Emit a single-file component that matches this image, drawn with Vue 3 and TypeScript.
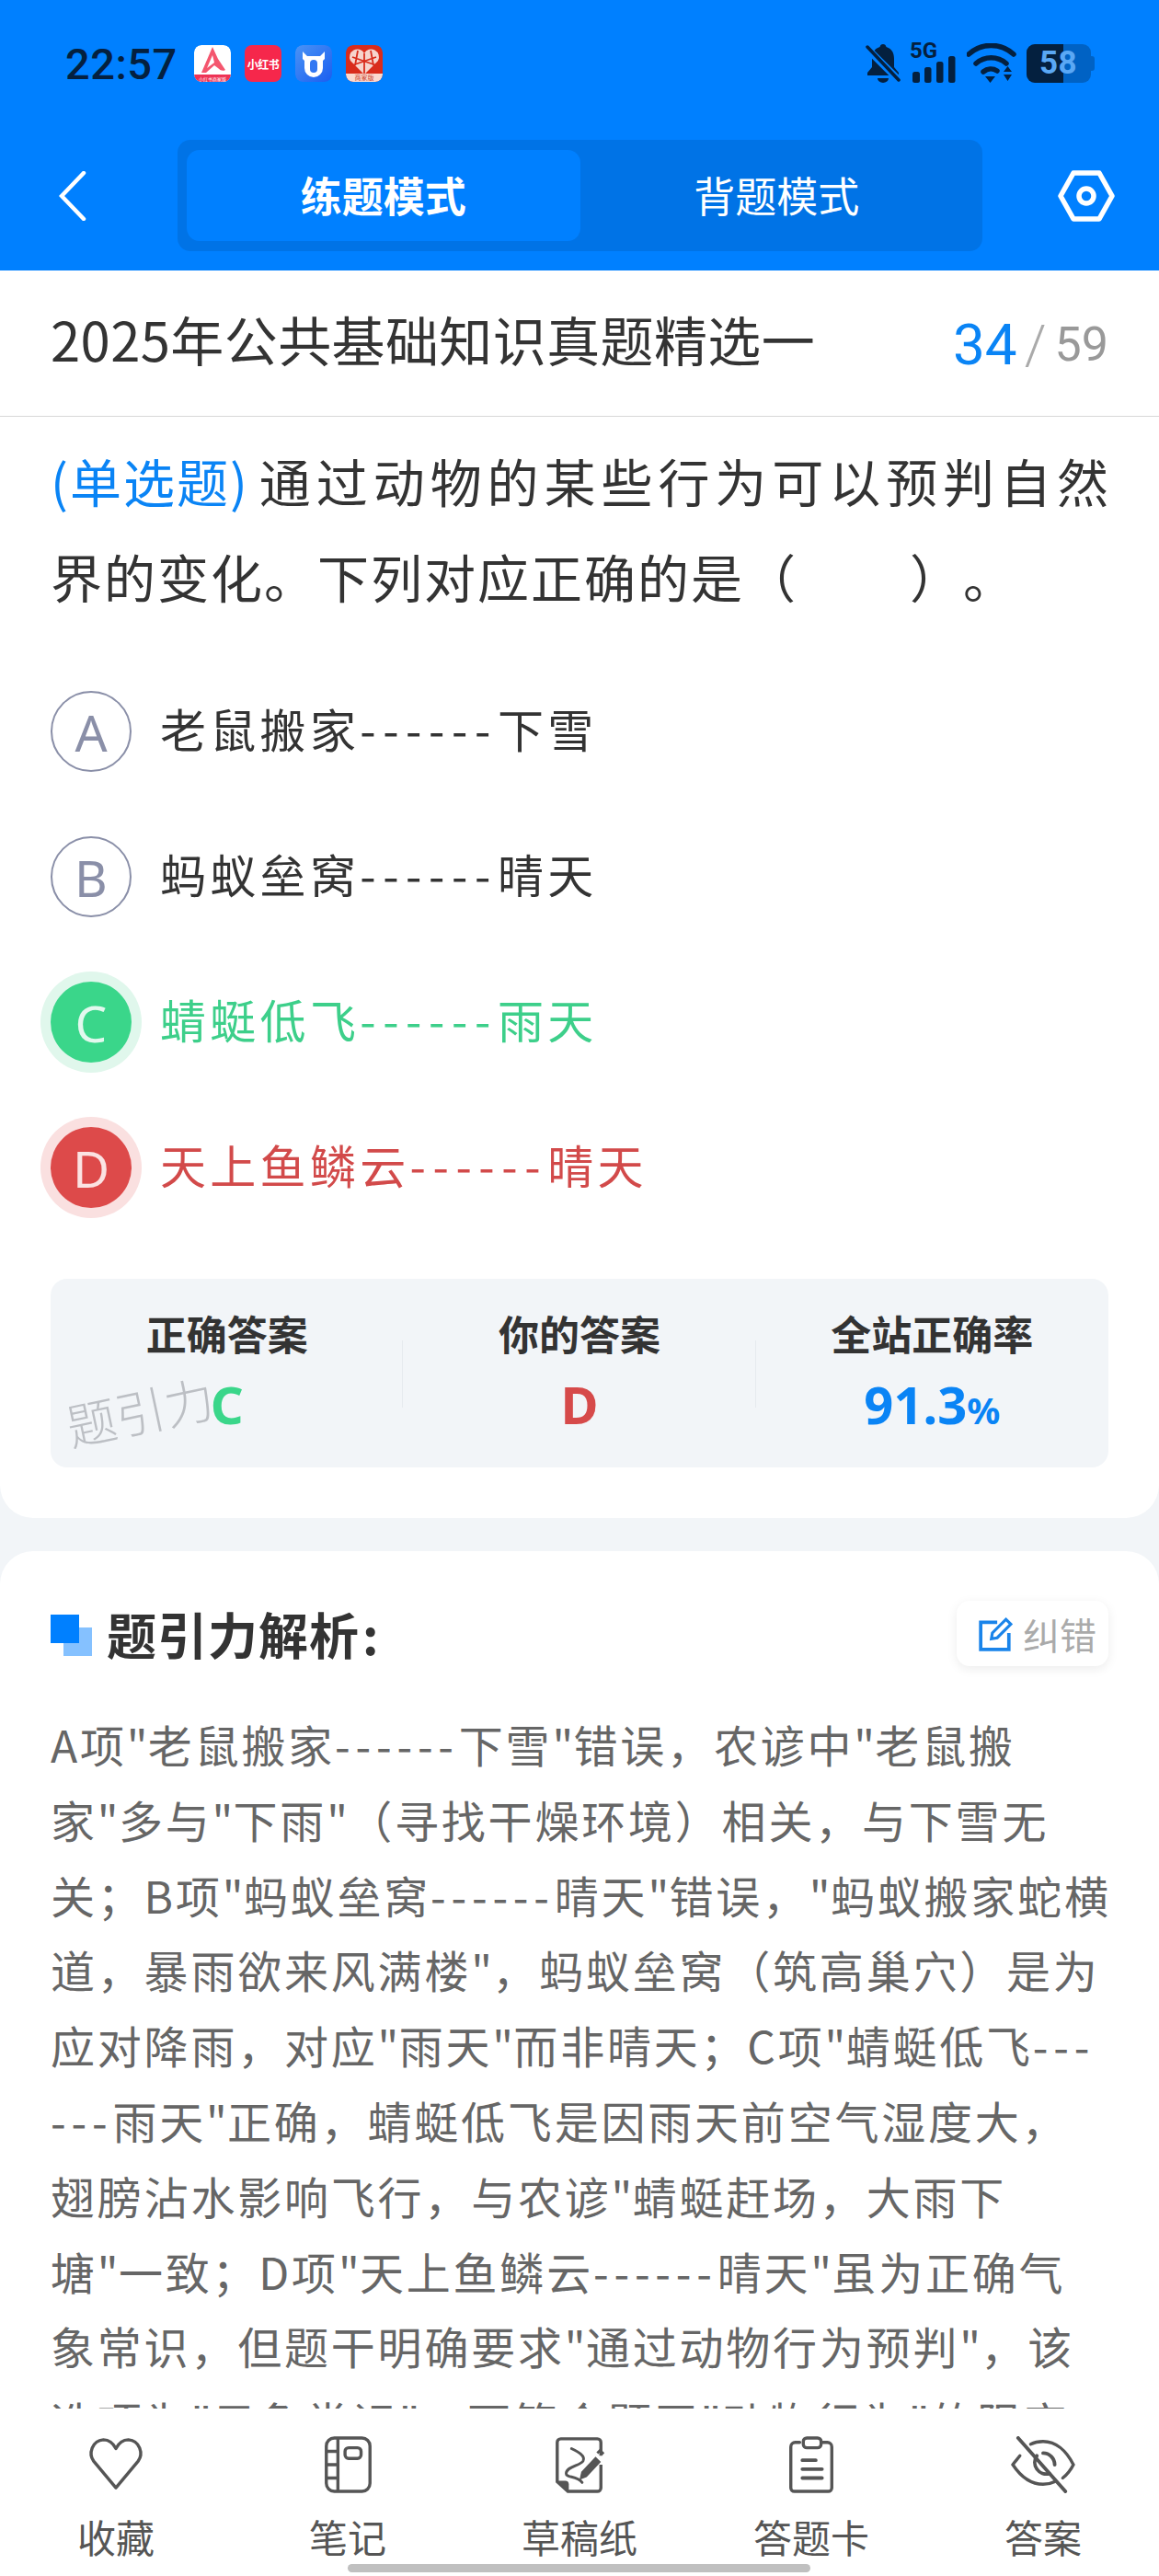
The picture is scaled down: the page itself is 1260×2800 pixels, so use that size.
<script setup lang="ts">
interface Opt { key: string; text: string; state: string }
interface Tok { t: string; c: string }
const options: Opt[] = [
  { key: 'A', text: '老鼠搬家------下雪', state: '' },
  { key: 'B', text: '蚂蚁垒窝------晴天', state: '' },
  { key: 'C', text: '蜻蜓低飞------雨天', state: 'right' },
  { key: 'D', text: '天上鱼鳞云------晴天', state: 'wrong' },
]
const lines: string[] = [
  'A项"老鼠搬家------下雪"错误，农谚中"老鼠搬',
  '家"多与"下雨"（寻找干燥环境）相关，与下雪无',
  '关；B项"蚂蚁垒窝------晴天"错误，"蚂蚁搬家蛇横',
  '道，暴雨欲来风满楼"，蚂蚁垒窝（筑高巢穴）是为',
  '应对降雨，对应"雨天"而非晴天；C项"蜻蜓低飞---',
  '---雨天"正确，蜻蜓低飞是因雨天前空气湿度大，',
  '翅膀沾水影响飞行，与农谚"蜻蜓赶场，大雨下',
  '塘"一致；D项"天上鱼鳞云------晴天"虽为正确气',
  '象常识，但题干明确要求"通过动物行为预判"，该',
  '选项为"云象常识"，不符合题干"动物行为"的限定',
]
function toks(s: string): Tok[] {
  return s.split(/(-+|")/).filter(Boolean).map((t) => ({
    t,
    c: t[0] === '-' ? 'dash' : t === '"' ? 'quote' : '',
  }))
}
const tabs = ['收藏', '笔记', '草稿纸', '答题卡', '答案']
</script>

<template>
  <div class="screen">
    <header class="head">
      <div class="status">
        <span class="time">22:57</span>
        <div class="apps">
          <svg class="app" viewBox="0 0 40 40">
            <rect width="40" height="40" rx="8" fill="#fff"/>
            <path d="M0 32h40v0a8 8 0 0 1-8 8H8a8 8 0 0 1-8-8z" fill="#ee3355"/>
            <path d="M20 2l6 13 8 12c-3 2-6 0-8-2l-4-3-9 8-5 0z" fill="#f4566e"/>
            <path d="M20 11l-6 14 8-6z" fill="#fff"/>
            <text x="20" y="38.500" font-size="5" fill="#fff" text-anchor="middle">小红书商家版</text>
          </svg>
          <div class="app red"><span>小红书</span></div>
          <svg class="app" viewBox="0 0 40 40">
            <defs><linearGradient id="bluegrad" x1="0" y1="0" x2="1" y2="1"><stop offset="0" stop-color="#4a93f5"/><stop offset="1" stop-color="#1a5ef0"/></linearGradient></defs>
            <rect width="40" height="40" rx="8" fill="url(#bluegrad)"/>
            <path d="M8 7l5 5h14l5-5v8l-2 2v8a10 10 0 0 1-20 0v-8l-2-2z" fill="#fff"/>
            <rect x="16" y="16" width="8" height="14" rx="4" fill="#3277f2"/>
          </svg>
          <svg class="app" viewBox="0 0 40 40">
            <rect width="40" height="40" rx="8" fill="#d92c1c"/>
            <path d="M20 32L5 17a8 8 0 0 1 15-8 8 8 0 0 1 15 8z" fill="#f6d5cd"/>
            <path d="M20 9v22M7 13l26 9M33 13L7 22M13 6l-3 16M27 6l3 16" stroke="#d92c1c" stroke-width="1.800" fill="none"/>
            <path d="M0 31h40v1a8 8 0 0 1-8 8H8a8 8 0 0 1-8-8z" fill="#fbd9cf"/>
            <text x="20" y="38" font-size="7" fill="#c8402c" text-anchor="middle">商家版</text>
          </svg>
        </div>
        <div class="sys">
          <svg class="bell" viewBox="0 0 38 44">
            <path d="M19 1c-2 0-3 1-3.500 3C9 6 7 11 7 17v9l-5 6v3h34v-3l-5-6v-9c0-6-2-11-8.500-13C22 2 21 1 19 1z" fill="#04203f"/>
            <path d="M13 38h12a6 5 0 0 1-12 0z" fill="#04203f"/>
            <path d="M1 5l36 36" stroke="#0080ff" stroke-width="8"/>
            <path d="M2 4l34 36" stroke="#04203f" stroke-width="3.500" stroke-linecap="round"/>
          </svg>
          <div class="signal">
            <span class="five">5G</span>
            <svg viewBox="0 0 48 30" class="bars">
              <rect x="0" y="17" width="8" height="12" rx="2.500"/>
              <rect x="13" y="12" width="7.500" height="17" rx="2.500"/>
              <rect x="26" y="6" width="7.500" height="23" rx="2.500"/>
              <rect x="39" y="0" width="7.500" height="29" rx="2.500"/>
            </svg>
          </div>
          <svg class="wifi" viewBox="0 0 54 44">
            <path d="M2 12a36 36 0 0 1 49 0M10 22a25 25 0 0 1 33 0M18 31a13 13 0 0 1 15-1" fill="none" stroke="#04203f" stroke-width="5.500" stroke-linecap="round"/>
            <path d="M20 36h11l-5.500 7zM40 31l4.500-6 4.500 6zM40 34h9l-4.500 7z" fill="#04203f"/>
          </svg>
          <div class="battery"><span class="fill"></span><span class="pct">58</span></div>
        </div>
      </div>
      <nav class="nav">
        <svg class="back" viewBox="0 0 30 54"><path d="M27 2L3 27l24 25" fill="none" stroke="#fff" stroke-width="4.500" stroke-linecap="round"/></svg>
        <div class="mode">
          <span class="mode-item on">练题模式</span>
          <span class="mode-item">背题模式</span>
        </div>
        <svg class="hex" viewBox="0 0 62 56">
          <path d="M17 3h28l14 25-14 25H17L3 28z" fill="none" stroke="#fff" stroke-width="5.500" stroke-linejoin="round"/>
          <circle cx="31" cy="28" r="8" fill="none" stroke="#fff" stroke-width="5.500"/>
        </svg>
      </nav>
    </header>

    <main class="scroll">
      <section class="card top">
        <div class="title-row">
          <h1 class="title">2025年公共基础知识真题精选一</h1>
          <div class="count"><b>34</b><i>/</i><span>59</span></div>
        </div>
        <div class="question">
          <div class="q1"><em>(单选题)</em>通过动物的某些行为可以预判自然</div>
          <div class="q2">界的变化。下列对应正确的是（<span class="blank"></span>）。</div>
        </div>
        <ul class="options">
          <li v-for="o in options" :key="o.key" class="opt" :class="o.state">
            <span class="dot">{{ o.key }}</span>
            <span class="opt-text"><span v-for="(k, j) in toks(o.text)" :key="j" :class="k.c">{{ k.t }}</span></span>
          </li>
        </ul>
        <div class="stats">
          <div class="stat">
            <span class="label">正确答案</span>
            <span class="val green">C</span>
            <span class="mark">题引力</span>
          </div>
          <div class="stat">
            <span class="label">你的答案</span>
            <span class="val redc">D</span>
          </div>
          <div class="stat">
            <span class="label">全站正确率</span>
            <span class="val blue">91.3<small>%</small></span>
          </div>
        </div>
      </section>

      <section class="card analysis">
        <div class="ana-head">
          <div class="ana-title">
            <span class="squares"><i></i><u></u></span>
            <h2>题引力解析<span class="colon">:</span></h2>
          </div>
          <div class="fix">
            <svg viewBox="0 0 36 36"><path d="M20 6H3v28h29V17" fill="none" stroke="#1a84ea" stroke-width="3.500"/><path d="M14 23l1-6L29 3l5 5-14 14z" fill="none" stroke="#1a84ea" stroke-width="3"/></svg>
            <span>纠错</span>
          </div>
        </div>
        <div class="ana-body">
          <div v-for="(l, i) in lines" :key="i" class="line"><span v-for="(k, j) in toks(l)" :key="j" :class="k.c">{{ k.t }}</span></div>
        </div>
      </section>
    </main>

    <footer class="tabbar">
      <div v-for="(t, i) in tabs" :key="t" class="tab">
        <svg v-if="i === 0" viewBox="0 0 64 64" class="ic"><path d="M32 58L7 28C1 20 5 5 18 4c7 0 11 4 14 10 3-6 7-10 14-10 13 1 17 16 11 24z" fill="none" stroke="#555" stroke-width="3.500" stroke-linejoin="round"/></svg>
        <svg v-else-if="i === 1" viewBox="0 0 64 64" class="ic">
          <rect x="8" y="2" width="49" height="60" rx="9" fill="none" stroke="#555" stroke-width="3.500"/>
          <path d="M21 2v60M8 17h13M8 32h13M8 47h13" fill="none" stroke="#555" stroke-width="3.500"/>
          <rect x="29" y="13" width="18" height="12" rx="4" fill="none" stroke="#555" stroke-width="3.500"/>
        </svg>
        <svg v-else-if="i === 2" viewBox="0 0 64 64" class="ic">
          <path d="M56 22V7a4 4 0 0 0-4-4H11a4 4 0 0 0-4 4v44l12 11h33a4 4 0 0 0 4-4V32" fill="none" stroke="#555" stroke-width="3.500"/>
          <path d="M7 50h9a4 4 0 0 1 4 4v8z" fill="#555"/>
          <path d="M23 14c8 4 16 8 13 14-3 5-19 6-19 14 0 5 12 2 18 10" fill="none" stroke="#555" stroke-width="3" stroke-linecap="round"/>
          <path d="M40 46l-8 3 2-9 16-17 6 6z" fill="#555"/>
          <path d="M52 19l3-3 4 4" fill="none" stroke="#555" stroke-width="3"/>
        </svg>
        <svg v-else-if="i === 3" viewBox="0 0 64 64" class="ic">
          <path d="M19 7h-5a5 5 0 0 0-5 5v46a4 4 0 0 0 4 4h38a4 4 0 0 0 4-4V12a5 5 0 0 0-5-5h-5" fill="none" stroke="#555" stroke-width="3.500" stroke-linecap="round"/>
          <rect x="23" y="2" width="20" height="11" rx="4" fill="none" stroke="#555" stroke-width="3.500"/>
          <path d="M22 27h15M22 37h22M22 47h22" stroke="#555" stroke-width="4" stroke-linecap="round"/>
        </svg>
        <svg v-else viewBox="0 0 72 64" class="ic wide">
          <path d="M10 22c-3 4-6 7-8 10 8 12 20 22 34 22 5 0 9-1 13-3M22 9c4-2 9-3 14-3 14 0 26 10 34 26-3 6-7 11-12 15" fill="none" stroke="#555" stroke-width="3.500" stroke-linecap="round"/>
          <path d="M29 22a13 13 0 0 0 14 20M36 19a13 13 0 0 1 13 13" fill="none" stroke="#555" stroke-width="4" stroke-linecap="round"/>
          <path d="M8 2l53 60" stroke="#555" stroke-width="4" stroke-linecap="round"/>
        </svg>
        <span>{{ t }}</span>
      </div>
      <span class="home"></span>
    </footer>
  </div>
</template>

<style>
html, body { margin: 0; background: #f2f5f8; }
</style>

<style scoped>
.screen {
  position: relative;
  width: 1260px;
  height: 2800px;
  display: flex;
  flex-direction: column;
  overflow: hidden;
  background: #f2f5f8;
  font-family: "Noto Sans CJK SC", "Noto Sans", sans-serif;
  color: #333;
}
.head { height: 294px; flex: none; background: #0080ff; }
.status { height: 138px; display: flex; align-items: center; padding: 0 70px 0 71px; }
.time { font: 500 47px/1 Roboto, sans-serif; color: #04203f; width: 140px; letter-spacing: 0.5px; }
.apps { display: flex; gap: 15px; }
.app { width: 40px; height: 40px; border-radius: 8px; display: block; }
.red { background: #f6274b; color: #fff; display: flex; align-items: center; justify-content: center; }
.red span { font-size: 12px; font-weight: 700; white-space: nowrap; letter-spacing: -0.5px; }
.sys { margin-left: auto; display: flex; align-items: center; gap: 11px; }
.bell { width: 38px; height: 44px; }
.signal { position: relative; width: 50px; height: 44px; }
.five { position: absolute; left: -1px; top: -4px; font: 700 24px/1 Roboto, sans-serif; color: #04203f; }
.bars { position: absolute; left: 2px; bottom: 0; width: 48px; height: 30px; fill: #04203f; }
.wifi { width: 54px; height: 44px; }
.battery {
  position: relative; width: 70px; height: 42px; border-radius: 9px; background: #0062c4;
  margin-right: 4px;
}
.battery::after { content: ""; position: absolute; right: -4px; top: 13px; width: 4px; height: 16px; border-radius: 0 3px 3px 0; background: #0062c4; }
.fill { position: absolute; left: 0; top: 0; bottom: 0; width: 40px; background: #04203f; border-radius: 9px 0 0 9px; }
.pct { position: absolute; left: 14px; right: 0; top: 0; font: 700 35px/42px Roboto, sans-serif; color: #5aa8f5; letter-spacing: 0.5px; }
.nav { height: 156px; display: flex; align-items: flex-start; padding: 14px 49px 0 64px; }
.back { width: 30px; height: 54px; margin-top: 34px; flex: none; }
.mode {
  margin-left: 99px; width: 875px; height: 121px; box-sizing: border-box; padding: 11px 10px;
  background: #0073e6; border-radius: 14px; display: flex; flex: none;
}
.mode-item { flex: 1; display: flex; align-items: center; justify-content: center; font-size: 45px; color: #fff; border-radius: 14px; padding-bottom: 2px; }
.mode-item.on { background: #0080ff; font-weight: 700; }
.hex { width: 62px; height: 56px; margin: 33px 0 0 82px; flex: none; }

.scroll { flex: 1; min-height: 0; overflow: hidden; display: flex; flex-direction: column; gap: 36px; }
.card { background: #fff; border-radius: 36px; flex: none; }
.top { height: 1356px; border-radius: 0 0 36px 36px; box-sizing: border-box; }
.title-row {
  height: 159px; box-sizing: border-box; border-bottom: 1px solid #d8d8d8; display: flex; align-items: center;
  justify-content: space-between; padding: 0 55px;
}
.title { margin: 0 0 10px; font-size: 58px; font-weight: 400; color: #333; letter-spacing: 0.4px; }
.count { display: flex; align-items: center; font-family: Roboto, sans-serif; margin-top: 2px; }
.count b { font-size: 62px; font-weight: 400; color: #0a84f5; }
.count i { font-style: normal; font-size: 60px; color: #aaa; margin: 0 9px 0 8px; font-weight: 300; }
.count span { font-size: 52px; color: #999; }
.question { margin: 17px 55px 0; font-size: 56px; line-height: 104px; color: #333; }
.q1 { text-align: justify; text-align-last: justify; }
.q2 { letter-spacing: 2px; white-space: nowrap; text-spacing-trim: space-all; }
.blank { display: inline-block; width: 122px; }
.q1 em { display: inline-block; font-style: normal; color: #0a84f5; margin-right: 5px; letter-spacing: 2px; }
.options { list-style: none; margin: 38px 0 0; padding: 0 0 0 55px; }
.opt { height: 158px; display: flex; align-items: center; gap: 31px; font-size: 50px; letter-spacing: 4.300px; color: #333; }
.opt-text { padding-bottom: 9px; white-space: nowrap; }
.opt-text .dash { letter-spacing: 7.600px; }
.dot {
  width: 88px; height: 88px; flex: none; box-sizing: border-box; border: 2.500px solid #8a8fa8; border-radius: 50%;
  display: flex; align-items: center; justify-content: center; color: #8a8fa8; font: 400 55px/1 "Noto Sans", sans-serif; letter-spacing: 0;
}
.right { color: #3dcf8a; }
.right .dot { background: #3ad68a; border: 0; color: #e2f8ee; box-shadow: 0 0 0 11px #e0f7ec; }
.wrong { color: #d24a4a; }
.wrong .dot { background: #dd4a4a; border: 0; color: #fbe3e3; box-shadow: 0 0 0 11px #fae0e0; }
.stats {
  margin: 42px 55px 0; height: 205px; background: #f2f5f8; border-radius: 18px; display: grid; grid-template-columns: 1fr 1fr 1fr; align-items: stretch;
}
.stat { position: relative; display: flex; flex-direction: column; align-items: center; padding-top: 29px; }
.stat + .stat::before { content: ""; position: absolute; left: -1px; top: 67px; height: 73px; width: 1px; background: #e6eaee; }
.label { font-size: 44px; font-weight: 700; line-height: 60px; color: #333; }
.val { font: 700 56px/70px "Noto Sans", sans-serif; margin-top: 12px; }
.green { color: #3ad68a; }
.redc { color: #d64a4a; }
.blue { color: #0a84f5; }
.val small { font-size: 40px; }
.mark { position: absolute; left: 16px; top: 116px; font-size: 54px; font-weight: 300; color: #bcbfc4; transform: rotate(-12deg); line-height: 1; }

.analysis { padding: 54px 55px 0; height: 1000px; box-sizing: border-box; }
.ana-head { display: flex; align-items: center; justify-content: space-between; height: 71px; }
.ana-title { display: flex; align-items: center; }
.squares { position: relative; width: 45px; height: 45px; margin-top: 4px; flex: none; }
.squares i { position: absolute; left: 14px; top: 14px; width: 31px; height: 31px; background: #85c1ff; }
.squares u { position: absolute; left: 0; top: 0; width: 31px; height: 31px; background: #0080ff; }
.ana-title h2 { margin: 0 0 0 16px; font-size: 54px; font-weight: 700; color: #333; letter-spacing: 1px; }
.colon { margin-left: 3px; }
.fix {
  width: 165px; height: 71px; box-sizing: border-box; border-radius: 14px; background: #fff;
  box-shadow: 0 3px 12px rgba(0, 0, 0, 0.08); display: flex; align-items: center; gap: 11px; padding-left: 23px; color: #aaa; font-size: 40px;
}
.fix svg { width: 38px; height: 38px; flex: none; }
.ana-body { margin-top: 44px; font-size: 48px; line-height: 81.800px; color: #666; letter-spacing: 2.800px; white-space: nowrap; }
.line { height: 81.800px; }
.line .dash { letter-spacing: 5.800px; }
.line .quote { letter-spacing: 0.300px; }

.tabbar {
  position: relative; flex: none; height: 182px; background: #fff; display: grid; grid-template-columns: repeat(5, 1fr); box-sizing: border-box;
}
.tab { display: flex; flex-direction: column; align-items: center; padding-top: 30px; color: #555; font-size: 42px; }
.tab span { margin-top: 17px; line-height: 60px; }
.ic { width: 62px; height: 62px; display: block; }
.ic.wide { width: 70px; }
.home { position: absolute; left: 378px; top: 169px; width: 503px; height: 9px; border-radius: 5px; background: #c0c0c0; }
</style>
